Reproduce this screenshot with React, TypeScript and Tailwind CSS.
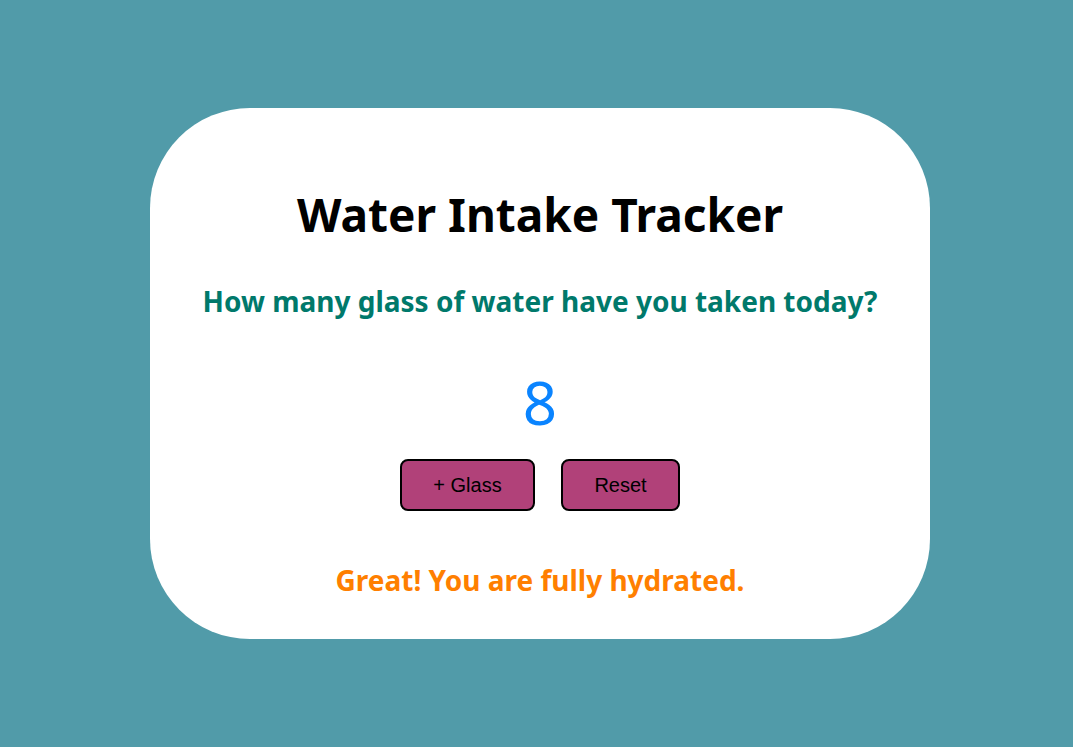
import React, { useState } from 'react';

export default function App() {
  const [count, setCount] = useState(8);

  return (
    <div className="min-h-screen w-full bg-[#519ba9] flex items-center justify-center">
      <div className="ml-[7px] w-[780px] h-[531px] bg-white rounded-[100px] flex flex-col items-center pt-[77px] font-['Noto_Sans',sans-serif]">
        <h1 className="text-[46px] leading-[58px] font-bold text-black">Water Intake Tracker</h1>
        <h2 className="mt-[39px] text-[28px] leading-[38px] font-bold text-[#00796b]">
          How many glass of water have you taken today?
        </h2>
        <div className="mt-[47px] text-[60px] leading-[70px] text-[#0a84ff]">{count}</div>
        <div className="mt-[22px] flex gap-[26px] font-['Liberation_Sans',Arial,sans-serif]">
          <button
            onClick={() => setCount(count + 1)}
            className="w-[135px] h-[52px] bg-[#b14179] border-2 border-black rounded-[8px] text-[20px] text-black"
          >
            + Glass
          </button>
          <button
            onClick={() => setCount(0)}
            className="w-[119px] h-[52px] bg-[#b14179] border-2 border-black rounded-[8px] text-[20px] text-black"
          >
            Reset
          </button>
        </div>
        <p className="mt-[50px] text-[28px] leading-[38px] font-bold text-[#ff7f00]">
          {count >= 8 ? 'Great! You are fully hydrated.' : 'Keep drinking water!'}
        </p>
      </div>
    </div>
  );
}
